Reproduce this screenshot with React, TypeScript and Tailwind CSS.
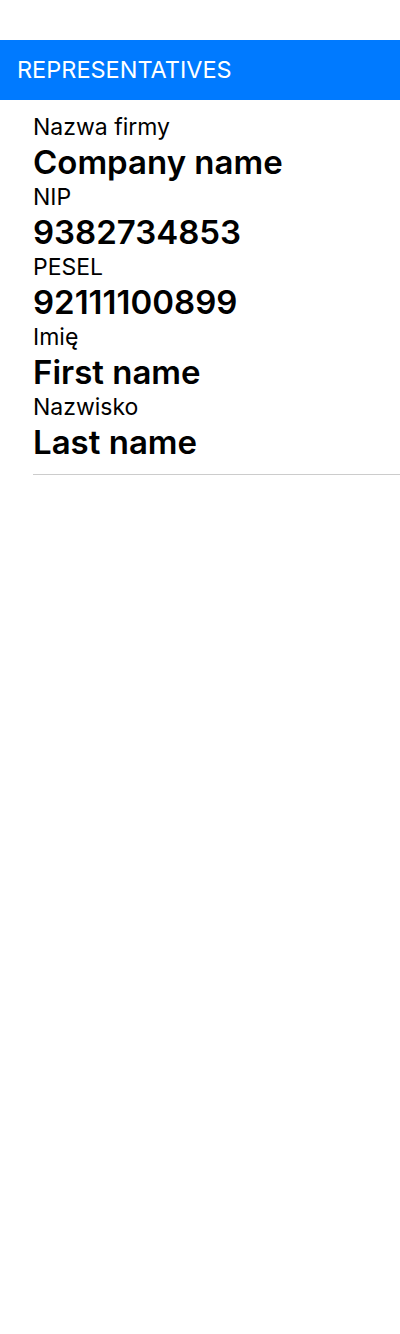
export default function App() {
  const rows = [
    { label: "Nazwa firmy", value: "Company name" },
    { label: "NIP", value: "9382734853" },
    { label: "PESEL", value: "92111100899" },
    { label: "Imię", value: "First name" },
    { label: "Nazwisko", value: "Last name" },
  ]

  return (
    <div className="min-h-[1334px] bg-white font-['Inter','Liberation_Sans',sans-serif] text-black">
      <div className="h-10" />
      <div className="flex h-[60px] items-center bg-[#007aff] px-[17px]">
        <span className="text-[23.5px] leading-none text-white">REPRESENTATIVES</span>
      </div>
      <div className="ml-[33px] border-b border-[#cccccc] pt-[10px] pb-[14px]">
        {rows.map((row) => (
          <div key={row.label} className="flex flex-col">
            <span className="text-[23px] leading-[35px]">{row.label}</span>
            <span className="text-[33px] leading-[35px] font-semibold">{row.value}</span>
          </div>
        ))}
      </div>
    </div>
  )
}
